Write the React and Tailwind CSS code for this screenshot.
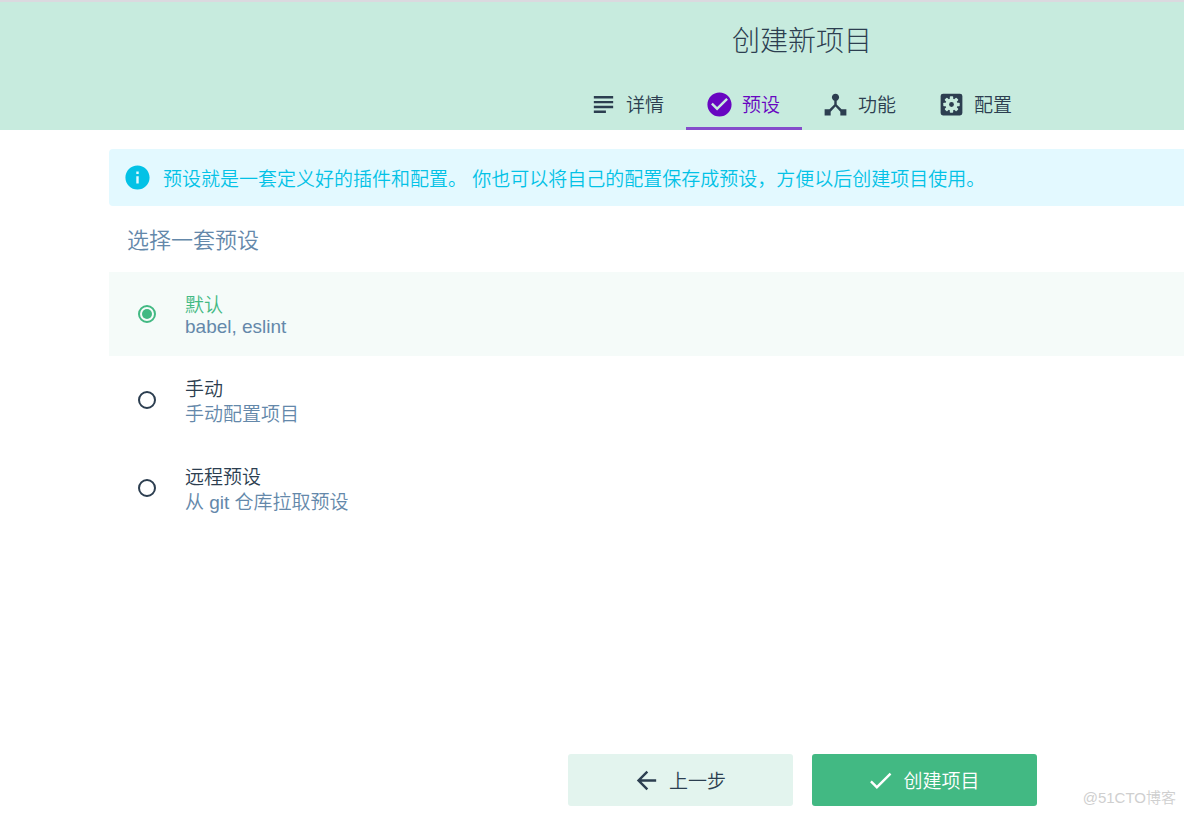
import { useState } from "react";
import clsx from "clsx";
import {
  MdArrowBack,
  MdCheckCircle,
  MdDeviceHub,
  MdDone,
  MdInfo,
  MdSubject,
} from "react-icons/md";

function SettingsIcon({ className }) {
  return (
    <svg viewBox="0 0 24 24" className={className}>
      <rect x="3" y="3" width="18" height="18" rx="2" fill="currentColor" />
      <g fill="#c7ebde">
        <circle cx="12" cy="12" r="5" />
        {[0, 45, 90, 135].map((angle) => (
          <rect
            key={angle}
            x="10.6"
            y="5.2"
            width="2.8"
            height="13.6"
            rx="0.6"
            transform={`rotate(${angle} 12 12)`}
          />
        ))}
      </g>
      <circle cx="12" cy="12" r="2" fill="currentColor" />
    </svg>
  );
}

const tabs = [
  { id: "details", label: "详情", icon: MdSubject },
  { id: "presets", label: "预设", icon: MdCheckCircle },
  { id: "features", label: "功能", icon: MdDeviceHub },
  { id: "config", label: "配置", icon: SettingsIcon },
];

const presets = [
  { id: "default", name: "默认", description: "babel, eslint", leading: "leading-[17px]" },
  { id: "manual", name: "手动", description: "手动配置项目", leading: "leading-[25px]" },
  { id: "remote", name: "远程预设", description: "从 git 仓库拉取预设", leading: "leading-[25px]" },
];

export default function App() {
  const [activeTab, setActiveTab] = useState("presets");
  const [selected, setSelected] = useState("default");

  return (
    <div className="relative min-h-screen flex flex-col overflow-hidden bg-white text-[19px] leading-[25px] font-[350] text-[#2c3e50] font-['Liberation_Sans','Noto_Sans_CJK_SC',sans-serif]">
      <header className="bg-[#c7ebde] border-t-2 border-[#dbd9df] pl-[420px] flex flex-col items-center">
        <h1 className="pt-[21px] pb-[18px] text-[28px] leading-[37px] font-light">创建新项目</h1>
        <nav className="flex">
          {tabs.map(({ id, label, icon: Icon }) => (
            <button
              key={id}
              type="button"
              onClick={() => setActiveTab(id)}
              className={clsx(
                "h-[52px] pt-[3px] pl-[19px] pr-[22px] flex items-center gap-2 border-b-3 cursor-pointer",
                activeTab === id ? "border-[#854ccb] text-[#6806c1]" : "border-transparent"
              )}
            >
              <Icon className="w-[29px] h-[29px]" />
              <span className="pt-[2px]">{label}</span>
            </button>
          ))}
        </nav>
      </header>

      <main className="flex-1 pl-[109px]">
        <div className="mt-[19px] h-[57px] pl-[14px] flex items-center gap-[11px] rounded-l bg-[#e3f9ff] text-[#03c2e6]">
          <MdInfo className="w-[29px] h-[29px]" />
          <p className="pt-[3px]">预设就是一套定义好的插件和配置。 你也可以将自己的配置保存成预设，方便以后创建项目使用。</p>
        </div>

        <h2 className="h-[66px] pt-[3px] pl-[18px] flex items-center text-[22px] text-[#6488aa]">
          选择一套预设
        </h2>

        <div>
          {presets.map((preset) => (
            <label
              key={preset.id}
              className={clsx(
                "min-h-[84px] flex items-center gap-[29px] pl-[29px] cursor-pointer",
                selected === preset.id && "bg-[#f5fbf9]"
              )}
            >
              <input
                type="radio"
                name="preset"
                value={preset.id}
                checked={selected === preset.id}
                onChange={() => setSelected(preset.id)}
                className="appearance-none w-[18px] h-[18px] rounded-full border-2 border-[#2c3e50] p-[2px] bg-clip-content checked:border-[#42b983] checked:bg-[#42b983]"
              />
              <span className="self-start pt-[21px] pb-[17px] flex flex-col">
                <span className={clsx(selected === preset.id && "text-[#42b983]")}>
                  {preset.name}
                </span>
                <span className={clsx("text-[#6488aa]", preset.leading)}>
                  {preset.description}
                </span>
              </span>
            </label>
          ))}
        </div>
      </main>

      <footer className="pl-[420px] pb-2 flex justify-center gap-[19px]">
        <button
          type="button"
          className="w-[225px] h-[52px] pr-[2px] flex items-center justify-center gap-2 rounded-[3px] bg-[#e3f4ee] cursor-pointer"
        >
          <MdArrowBack className="w-[29px] h-[29px]" />
          <span className="pt-[2px]">上一步</span>
        </button>
        <button
          type="button"
          className="w-[225px] h-[52px] pr-[2px] flex items-center justify-center gap-2 rounded-[3px] bg-[#42b983] text-white cursor-pointer"
        >
          <MdDone className="w-[29px] h-[29px]" />
          <span className="pt-[2px]">创建项目</span>
        </button>
      </footer>

      <span className="absolute right-2 bottom-1 text-[15px] text-[#cfcfcf]">@51CTO博客</span>
    </div>
  );
}
